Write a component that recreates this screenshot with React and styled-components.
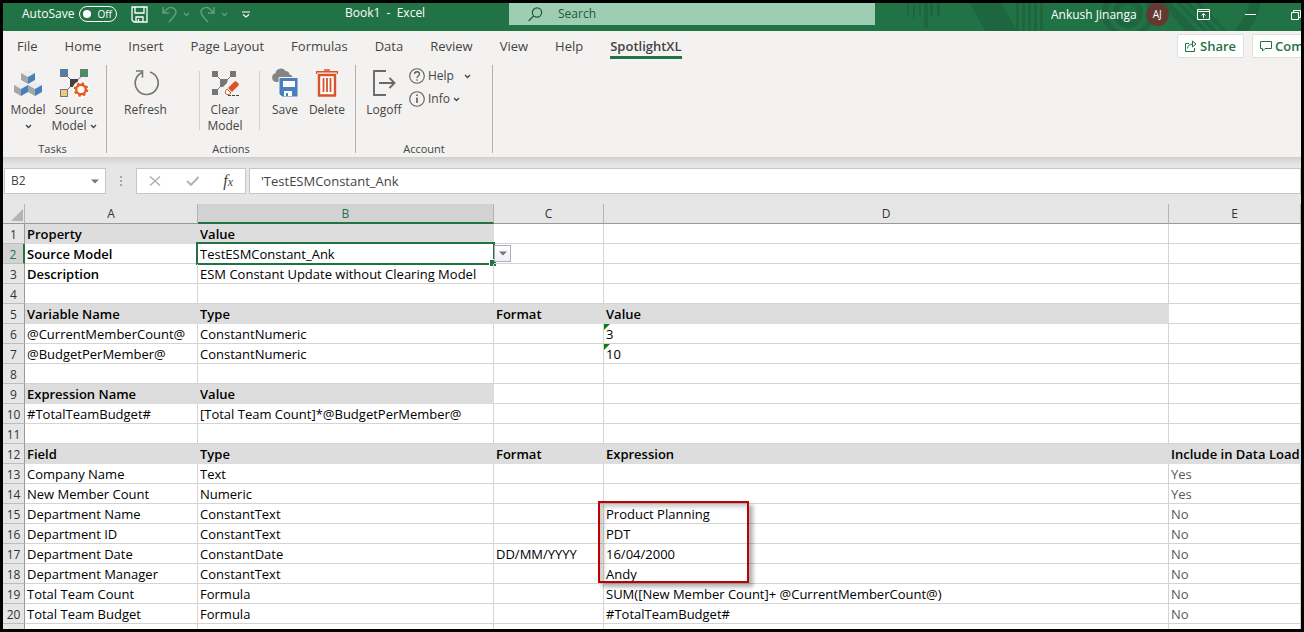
import React, { useState } from 'react';
import styled, { createGlobalStyle, css } from 'styled-components';

const GlobalStyle = createGlobalStyle`
    * {
        box-sizing: border-box;
    }
    body {
        margin: 0;
    }
    button, input {
        font: inherit;
        color: inherit;
    }
    button {
        background: none;
        border: 0;
        padding: 0;
    }
`;

const Frame = styled.div`
    height: 100vh;
    display: flex;
    flex-direction: column;
    overflow: hidden;
    border: 3px solid #000;
    background: #e6e6e6;
    color: #444;
    font-family: "Open Sans", "Noto Sans", sans-serif;
    font-size: 12px;
    line-height: 16px;
`;

/* ---- title bar ---- */

const TitleBar = styled.header`
    position: relative;
    flex: none;
    display: flex;
    align-items: flex-start;
    height: 28px;
    background: #217346;
    color: #fff;
    overflow: hidden;
`;

const Pattern = styled.svg`
    position: absolute;
    top: 0;
    right: 0;
`;

const QuickAccess = styled.div`
    flex: none;
    display: flex;
    align-items: center;
    width: 342px;
    height: 22px;
    padding-left: 19px;
`;

const AutoSave = styled.label`
    display: flex;
    align-items: center;
    gap: 5px;
    margin-right: 14px;
`;

const Switch = styled.span`
    display: flex;
    align-items: center;
    width: 38px;
    height: 16px;
    padding: 0 4px 0 3px;
    border: 1px solid #fff;
    border-radius: 8px;
    font-size: 10px;
    line-height: 14px;
`;

const Knob = styled.input`
    appearance: none;
    flex: none;
    width: 8px;
    height: 8px;
    margin: 0 6px 0 0;
    border-radius: 50%;
    background: #fff;
`;

const ToolButton = styled.button`
    display: flex;
    margin-right: ${({ $gap }) => $gap || 0}px;
    opacity: ${({ disabled }) => (disabled ? 0.3 : 1)};
`;

const BookTitle = styled.div`
    flex: none;
    width: 164px;
    padding-top: 2px;
    white-space: pre;
`;

const SearchBox = styled.label`
    flex: 0 1 366px;
    display: flex;
    align-items: center;
    gap: 15px;
    height: 22px;
    padding-left: 19px;
    background: #9fcdb3;
    color: #185c37;

    input {
        flex: 1;
        min-width: 0;
        padding: 0;
        border: 0;
        outline: 0;
        background: none;
    }
    input::placeholder {
        color: #185c37;
        opacity: 1;
    }
`;

const Account = styled.div`
    position: relative;
    flex: none;
    display: flex;
    align-items: center;
    gap: 9px;
    height: 23px;
    width: 250px;
    margin-left: auto;
    overflow: hidden;
    white-space: nowrap;
`;

const Avatar = styled.span`
    flex: none;
    width: 23px;
    height: 23px;
    border-radius: 50%;
    background: #633a31;
    font-size: 10px;
    line-height: 23px;
    text-align: center;
`;

const WindowButtons = styled.div`
    display: flex;
    align-items: center;
    gap: 35px;
    margin-left: 19px;
`;

/* ---- tabs ---- */

const TabBar = styled.nav`
    flex: none;
    display: flex;
    height: 31px;
    padding-left: 14px;
    background: #f3f2f1;
`;

const Tab = styled.a`
    height: 28px;
    padding-top: 7px;
    margin-right: 27px;
    border-bottom: 3px solid transparent;
    color: #444;
    font-size: 13px;
    text-decoration: none;
    white-space: nowrap;

    ${({ $active }) => $active && css`
        border-color: #217346;
        font-weight: 600;
    `}
`;

const TabActions = styled.div`
    display: flex;
    gap: 8px;
    width: 124px;
    margin-left: auto;
    padding-top: 3px;
    overflow: hidden;
`;

const TabAction = styled.button`
    flex: none;
    display: flex;
    align-items: center;
    gap: 3px;
    height: 24px;
    padding: 0 7px;
    border: 1px solid #e1dfdd;
    border-radius: 2px;
    background: #fff;
    color: #217346;
    font-size: 13px;
    font-weight: 600;
`;

/* ---- ribbon ---- */

const Ribbon = styled.section`
    flex: none;
    display: flex;
    height: 95px;
    padding-top: 3px;
    background: #f3f2f1;
`;

const Group = styled.div`
    display: flex;
    flex-direction: column;
    justify-content: space-between;
    width: ${({ $width }) => $width}px;
    height: 88px;
    border-right: 1px solid #b3b0ad;
`;

const GroupRow = styled.div`
    display: flex;
    padding-left: ${({ $indent }) => $indent || 0}px;
`;

const GroupLabel = styled.div`
    padding-right: ${({ $inset }) => $inset || 0}px;
    height: 10px;
    line-height: 12px;
    font-size: 11px;
    text-align: center;
`;

const RibbonButton = styled.button`
    display: flex;
    flex-direction: column;
    align-items: center;
    width: ${({ $width }) => $width}px;
    padding-top: 3px;
    white-space: nowrap;

    > svg {
        margin-bottom: 4px;
    }
    span {
        display: flex;
        align-items: center;
        gap: 3px;
        height: 16px;
    }
`;

const Divider = styled.div`
    width: 1px;
    height: 59px;
    margin: 6px ${({ $after }) => $after || 0}px 0 ${({ $before }) => $before || 0}px;
    background: #d2d0ce;
`;

const SmallButtons = styled.div`
    display: flex;
    flex-direction: column;
    align-items: flex-start;
    gap: 7px;
    padding: 3px 0 0 2px;
`;

const SmallButton = styled.button`
    display: flex;
    align-items: center;
    gap: 3px;
    height: 16px;

    svg:last-child {
        margin-left: ${({ $gap }) => $gap || 0}px;
    }
`;

/* ---- formula bar ---- */

const FormulaBar = styled.section`
    flex: none;
    display: flex;
    height: 47px;
    padding: 11px 0 10px 1px;
    background: linear-gradient(#d0d0d0, #e6e6e6 8px);
`;

const Box = styled.div`
    display: flex;
    align-items: center;
    flex: ${({ $width }) => ($width ? `0 0 ${$width}px` : '1')};
    min-width: 0;
    border: 1px solid #c6c6c6;
    background: #fff;
    font-size: ${({ $width }) => ($width ? 12 : 13)}px;

    input {
        flex: 1;
        min-width: 0;
        padding: 0 0 0 ${({ $indent }) => $indent || 6}px;
        border: 0;
        outline: 0;
        background: none;
    }
`;

const CaretButton = styled.button`
    display: flex;
    padding: 0 6px;
`;

const Dots = styled.div`
    display: flex;
    justify-content: center;
    align-items: center;
    flex: 0 0 30px;
`;

const FormulaTools = styled(Box)`
    justify-content: space-between;
    margin-right: 3px;
    padding: 0 12px;
`;

/* ---- sheet ---- */

const Sheet = styled.table`
    width: 100%;
    table-layout: fixed;
    border-spacing: 0;
    background: #fff;
    color: #000;
    font-size: 13px;
    line-height: 17px;

    col.rows { width: 22px; }
    col.a { width: 173px; }
    col.b { width: 296px; }
    col.c { width: 110px; }
    col.d { width: 565px; }
`;

const ColumnHead = styled.th`
    height: 20px;
    padding: 0;
    border-right: 1px solid #b4b4b4;
    border-bottom: 1px solid #999;
    background: #e6e6e6;
    color: #333;
    font-weight: 400;
    font-size: 12px;
    line-height: 18px;

    ${({ $selected }) => $selected && css`
        border-bottom: 2px solid #217346;
        background: #d2d2d2;
        color: #217346;
        line-height: 17px;
    `}
    svg {
        display: block;
        margin: 2px 1px 0 auto;
    }
`;

const RowHead = styled.th`
    height: 20px;
    padding: 2px 0 0;
    border-right: 1px solid #999;
    border-bottom: 1px solid #bdbdbd;
    background: #e6e6e6;
    color: #333;
    font-weight: 400;
    font-size: 12px;

    ${({ $selected }) => $selected && css`
        border-right: 2px solid #217346;
        background: #d2d2d2;
        color: #217346;
    `}
`;

const Cell = styled.td`
    position: relative;
    height: 20px;
    padding: 2px 0 0 2px;
    border-right: 1px solid #d4d4d4;
    border-bottom: 1px solid #d4d4d4;
    color: ${({ $muted }) => ($muted ? '#595959' : '#000')};
    font-weight: ${({ $bold }) => ($bold ? 600 : 400)};
    white-space: nowrap;

    ${({ $shaded }) => $shaded && css`
        border-color: #ddd;
        background: #ddd;
    `}
`;

const Selection = styled.div`
    position: absolute;
    inset: -2px;
    border: 2px solid #217346;

    &::after {
        content: "";
        position: absolute;
        right: -3px;
        bottom: -3px;
        width: 6px;
        height: 6px;
        border: solid #fff;
        border-width: 1px 0 0 1px;
        background: #217346;
    }
`;

const ValidationButton = styled.button`
    position: absolute;
    z-index: 1;
    left: calc(100% + 1px);
    top: 1px;
    display: flex;
    align-items: center;
    justify-content: center;
    width: 17px;
    height: 17px;
    border: 1px solid #a9b0b8;
    background: linear-gradient(#fff, #eceff3);
`;

const ErrorMark = styled.i`
    position: absolute;
    top: 0;
    left: 0;
    border-top: 6px solid #107c10;
    border-right: 6px solid transparent;
`;

const Highlight = styled.div`
    position: absolute;
    z-index: 2;
    top: -3px;
    left: -6px;
    width: 151px;
    height: 82px;
    border: 2px solid #c00000;
    box-shadow: 4px 4px 4px rgba(0, 0, 0, 0.3), inset 4px 4px 4px rgba(0, 0, 0, 0.2);
    pointer-events: none;
`;

/* ---- icons ---- */

const Chevron = ({ color = '#444' }) => (
    <svg width="7" height="5" viewBox="0 0 7 5" fill="none" stroke={color} strokeWidth="1.3">
        <path d="M1 1l2.5 2.5L6 1" />
    </svg>
);

const Caret = () => (
    <svg width="8" height="5" viewBox="0 0 8 5"><path d="M0 .5h8L4 4.5z" fill="#777" /></svg>
);

const SaveDiskIcon = () => (
    <svg width="17" height="17" viewBox="0 0 17 17" fill="none" stroke="#fff" strokeWidth="1.3">
        <path d="M1 1h15v15H3l-2-2zM4 1v6h9V1M5 16v-5h7v5M7.5 13v3" />
    </svg>
);

const UndoIcon = ({ flip }) => (
    <svg width="15" height="17" viewBox="0 0 15 17" fill="none" stroke="#fff" strokeWidth="1.5">
        <path
            transform={flip ? 'translate(15 0) scale(-1 1)' : undefined}
            d="M1 1v6h6M1 7l4-4c3-3 9-1 9 3 0 3-2 4-7 10"
        />
    </svg>
);

const CustomizeIcon = () => (
    <svg width="8" height="7" viewBox="0 0 8 7" fill="none" stroke="#fff" strokeWidth="1.2">
        <path d="M0 1h8M1 3.5l3 2.5 3-2.5" />
    </svg>
);

const SearchIcon = () => (
    <svg width="15" height="15" viewBox="0 0 15 15" fill="none" stroke="#185c37" strokeWidth="1.2">
        <circle cx="9" cy="5.5" r="4.6" />
        <path d="M5.7 8.8L.6 14" />
    </svg>
);

const TitlePattern = () => (
    <Pattern width="420" height="28" viewBox="0 0 420 28" fill="#1d6640">
        <path d="M26 0h2v13h-2zM32 0h2v16h-2zM38 0h2v13h-2zM43 0h4v25h-4zM49 0h3v13h-3zM56 0h3v13h-3z" />
        <path d="M89 0h31l16 28h-32zM135 0h3v28h-3zM141 0h3v28h-3zM147 0h3v28h-3zM153 0h3v28h-3zM159 0h3v28h-3z" />
        <g fill="none" stroke="#1d6640" strokeWidth="6">
            <circle cx="247" cy="10" r="23" />
            <circle cx="247" cy="10" r="12" />
            <path d="M374 -4c0 12-6 24-16 34" strokeWidth="11" />
        </g>
        <path d="M280 0h10l27 28h-12zM296 0h4l27 28h-5zM305 0h4l27 28h-5zM315 0h4l27 28h-5z" />
    </Pattern>
);

const RibbonDisplayIcon = () => (
    <svg width="13" height="11" viewBox="0 0 13 11" fill="none" stroke="#fff">
        <path d="M.5.5h12v10H.5zM.5 2.5h12M6.5 9V5M4.5 6.5l2-2 2 2" />
    </svg>
);

const MinimizeIcon = () => (
    <svg width="11" height="11" viewBox="0 0 11 11" stroke="#fff"><path d="M0 5.5h11" /></svg>
);

const RestoreIcon = () => (
    <svg width="10" height="10" viewBox="0 0 10 10" fill="none" stroke="#fff">
        <path d="M.5 2.5h7v7h-7zM2.5 2.5v-2h7v7h-2" />
    </svg>
);

const ShareIcon = () => (
    <svg width="12" height="12" viewBox="0 0 12 12" fill="none" stroke="#217346">
        <path d="M4 3.5H.5v8h9V8M2.5 8.5c.5-3 2-4.5 5-4.5M7.5 1L11 4 7.5 7V1z" />
    </svg>
);

const CommentIcon = () => (
    <svg width="12" height="11" viewBox="0 0 12 11" fill="none" stroke="#217346">
        <path d="M.5.5h11v7H5L2.5 10V7.5h-2z" />
    </svg>
);

const Cube = ({ x, y }) => (
    <g transform={`translate(${x} ${y})`}>
        <path d="M0 3l7-3 7 3-7 4z" fill="#ececec" />
        <path d="M0 3l7 4v7l-7-4z" fill="#a6a6a6" />
        <path d="M14 3L7 7v7l7-4z" fill="#4a7fbe" />
    </g>
);

const ModelIcon = () => (
    <svg width="28" height="30" viewBox="0 0 28 30">
        <Cube x={7} y={2} />
        <Cube x={0} y={14} />
        <Cube x={14} y={14} />
    </svg>
);

const SourceModelIcon = () => (
    <svg width="30" height="30" viewBox="0 0 30 30">
        <path d="M5 5l10 10L26 5M15 15L5 25" stroke="#767676" fill="none" />
        <rect x="1.5" y="1.5" width="7" height="7" fill="#4a7fbe" stroke="#767676" />
        <rect x="21.5" y="1.5" width="7" height="7" fill="#3f9464" stroke="#767676" />
        <rect x="1.5" y="21.5" width="7" height="7" fill="#edc77d" stroke="#767676" />
        <rect x="11" y="11" width="8" height="8" fill="#404040" />
        <circle cx="22" cy="21.5" r="8.5" fill="#fff" />
        <circle cx="22" cy="21.5" r="4.8" fill="none" stroke="#e8591c" strokeWidth="2.4" />
        <circle cx="22" cy="21.5" r="6.4" fill="none" stroke="#e8591c" strokeWidth="1.8" strokeDasharray="2.5 2.526" />
    </svg>
);

const RefreshIcon = () => (
    <svg width="26" height="30" viewBox="0 0 26 30" fill="none" stroke="#767676" strokeWidth="1.7">
        <path d="M9 4.5A11.5 11.5 0 1 0 17 4" />
        <path d="M3 3h6.5v6.5" strokeWidth="1.6" />
    </svg>
);

const ClearModelIcon = () => (
    <svg width="28" height="30" viewBox="0 0 28 30">
        <path d="M4 6l9 9L22 6M13 15l-9 9" stroke="#767676" fill="none" />
        <path d="M1 3h6v6H1zM19 3h6v6h-6zM1 21h6v6H1zM9 11h8l-1 4-4 4H9z" fill="#767676" />
        <path d="M17 20l6-6c1-1 2-1 3 0l1 1c1 1 1 2 0 3l-6 6z" fill="#d9532c" />
        <path d="M16 21l4 4c-2 2-4 2-5 1s-1-3 1-5z" fill="#fff" stroke="#d9532c" />
        <path d="M17 27.5h11" stroke="#444" strokeDasharray="3 1" />
    </svg>
);

const SaveIcon = () => (
    <svg width="28" height="30" viewBox="0 0 28 30">
        <path d="M5 14a4.5 4.5 0 0 1-.5-8.8A5.5 5.5 0 0 1 14.5 3a4 4 0 0 1 4 3.5 3.5 3.5 0 0 1 3 4.5L9 14z" fill="#848484" />
        <path d="M8 9.5h19V29H11l-3-3z" fill="#4a7fbe" stroke="#f3f2f1" />
        <path d="M12 13h12v6H12zM13 23h8v5h-8z" fill="#fff" />
        <path d="M15 25h2v3h-2z" fill="#4a7fbe" />
    </svg>
);

const DeleteIcon = () => (
    <svg width="22" height="30" viewBox="0 0 22 30" fill="none" stroke="#d9532c">
        <path d="M0 3.8h22M.5 4v2M21.5 4v2M8 2h6" strokeWidth="1.5" />
        <path d="M3 7h16v20.5H3z" fill="#fff" strokeWidth="2.4" />
        <path d="M7.5 10v14M11 10v14M14.5 10v14" strokeWidth="1.8" />
    </svg>
);

const LogoffIcon = () => (
    <svg width="24" height="30" viewBox="0 0 24 30" fill="none" stroke="#6a6a6a" strokeWidth="1.9">
        <path d="M14 3H2v24h12M7 15h16M17.5 10l5 5-5 5" />
    </svg>
);

const CircleGlyph = ({ info }) => (
    <svg width="16" height="16" viewBox="0 0 16 16" fill="none" stroke="#5e5e5e" strokeWidth="1.1">
        <circle cx="8" cy="8" r="7.3" />
        {info ? (
            <path d="M8 6.5V12M8 3.5V5" strokeWidth="1.6" />
        ) : (
            <path d="M5.5 6c0-3 5-3 5 0 0 2-2.5 2-2.5 4M8 11.2v1.5" strokeWidth="1.3" />
        )}
    </svg>
);

const DotsIcon = () => (
    <svg width="3" height="12" viewBox="0 0 3 12" fill="#a6a6a6">
        <path d="M0 1h2v2H0zM0 5h2v2H0zM0 9h2v2H0z" />
    </svg>
);

const CancelIcon = () => (
    <svg width="12" height="10" viewBox="0 0 12 10" stroke="#b4b4b4" strokeWidth="1.6"><path d="M1 .5l10 9M11 .5l-10 9" /></svg>
);

const EnterIcon = () => (
    <svg width="13" height="10" viewBox="0 0 13 10" fill="none" stroke="#b4b4b4" strokeWidth="2"><path d="M1 5l4 4 7.5-8" /></svg>
);

const FxIcon = styled.i`
    color: #444;
    font: italic 400 16px/16px "Liberation Serif", serif;

    small {
        font-size: 12px;
    }
`;

const SelectAllIcon = () => (
    <svg width="12" height="12" viewBox="0 0 12 12"><path d="M12 0v12H0z" fill="#b4b4b4" /></svg>
);

/* ---- data ---- */

const tabs = ['File', 'Home', 'Insert', 'Page Layout', 'Formulas', 'Data', 'Review', 'View', 'Help', 'SpotlightXL'];

const columns = ['A', 'B', 'C', 'D', 'E'];

// shade is the number of columns that have the heading fill
const rows = [
    { cells: ['Property', 'Value'], shade: 2 },
    { cells: ['Source Model', 'TestESMConstant_Ank'], bold: true },
    { cells: ['Description', 'ESM Constant Update without Clearing Model'], bold: true },
    { cells: [] },
    { cells: ['Variable Name', 'Type', 'Format', 'Value'], shade: 4 },
    { cells: ['@CurrentMemberCount@', 'ConstantNumeric', '', '3'], warn: true },
    { cells: ['@BudgetPerMember@', 'ConstantNumeric', '', '10'], warn: true },
    { cells: [] },
    { cells: ['Expression Name', 'Value'], shade: 2 },
    { cells: ['#TotalTeamBudget#', '[Total Team Count]*@BudgetPerMember@'] },
    { cells: [] },
    { cells: ['Field', 'Type', 'Format', 'Expression', 'Include in Data Load'], shade: 5 },
    { cells: ['Company Name', 'Text', '', '', 'Yes'] },
    { cells: ['New Member Count', 'Numeric', '', '', 'Yes'] },
    { cells: ['Department Name', 'ConstantText', '', 'Product Planning', 'No'], highlight: true },
    { cells: ['Department ID', 'ConstantText', '', 'PDT', 'No'] },
    { cells: ['Department Date', 'ConstantDate', 'DD/MM/YYYY', '16/04/2000', 'No'] },
    { cells: ['Department Manager', 'ConstantText', '', 'Andy', 'No'] },
    { cells: ['Total Team Count', 'Formula', '', 'SUM([New Member Count]+ @CurrentMemberCount@)', 'No'] },
    { cells: ['Total Team Budget', 'Formula', '', '#TotalTeamBudget#', 'No'] },
    { cells: [], last: true },
];

const SheetRow = ({ row, number }) => {
    const shade = row.shade || 0;
    return (
        <tr>
            <RowHead scope="row" $selected={number === 2}>{row.last ? '' : number}</RowHead>
            {columns.map((col, i) => (
                <Cell
                    key={col}
                    $shaded={i < shade}
                    $bold={i < shade || (row.bold && i === 0)}
                    $muted={i === 4 && !shade}
                >
                    {row.warn && i === 3 && <ErrorMark />}
                    {row.cells[i]}
                    {number === 2 && i === 1 && (
                        <>
                            <Selection />
                            <ValidationButton aria-label="Pick from list"><Caret /></ValidationButton>
                        </>
                    )}
                    {row.highlight && i === 3 && <Highlight />}
                </Cell>
            ))}
        </tr>
    );
};

const App = () => {
    const [autoSave, setAutoSave] = useState(false);
    const [search, setSearch] = useState('');
    const [cellName, setCellName] = useState('B2');
    const [formula, setFormula] = useState("'TestESMConstant_Ank");

    return (
        <Frame>
            <GlobalStyle />
            <TitleBar>
                <TitlePattern />
                <QuickAccess>
                    <AutoSave>
                        AutoSave
                        <Switch>
                            <Knob type="checkbox" checked={autoSave} onChange={e => setAutoSave(e.target.checked)} />
                            {autoSave ? 'On' : 'Off'}
                        </Switch>
                    </AutoSave>
                    <ToolButton aria-label="Save" $gap={14}><SaveDiskIcon /></ToolButton>
                    <ToolButton aria-label="Undo" disabled $gap={6}><UndoIcon /></ToolButton>
                    <ToolButton aria-label="Undo list" disabled $gap={10}><Chevron color="#fff" /></ToolButton>
                    <ToolButton aria-label="Redo" disabled $gap={6}><UndoIcon flip /></ToolButton>
                    <ToolButton aria-label="Redo list" disabled $gap={14}><Chevron color="#fff" /></ToolButton>
                    <ToolButton aria-label="Customize toolbar"><CustomizeIcon /></ToolButton>
                </QuickAccess>
                <BookTitle>{'Book1  -  Excel'}</BookTitle>
                <SearchBox>
                    <SearchIcon />
                    <input
                        aria-label="Search"
                        placeholder="Search"
                        value={search}
                        onChange={e => setSearch(e.target.value)}
                    />
                </SearchBox>
                <Account>
                    Ankush Jinanga
                    <Avatar>AJ</Avatar>
                    <WindowButtons>
                        <ToolButton aria-label="Ribbon display options"><RibbonDisplayIcon /></ToolButton>
                        <ToolButton aria-label="Minimize"><MinimizeIcon /></ToolButton>
                        <ToolButton aria-label="Restore"><RestoreIcon /></ToolButton>
                    </WindowButtons>
                </Account>
            </TitleBar>

            <TabBar>
                {tabs.map(tab => (
                    <Tab key={tab} href="#" $active={tab === 'SpotlightXL'}>{tab}</Tab>
                ))}
                <TabActions>
                    <TabAction><ShareIcon />Share</TabAction>
                    <TabAction><CommentIcon />Comments</TabAction>
                </TabActions>
            </TabBar>

            <Ribbon>
                <Group $width={104}>
                    <GroupRow $indent={2}>
                        <RibbonButton $width={46}>
                            <ModelIcon />
                            <span>Model</span>
                            <span><Chevron /></span>
                        </RibbonButton>
                        <RibbonButton $width={46}>
                            <SourceModelIcon />
                            <span>Source</span>
                            <span>Model<Chevron /></span>
                        </RibbonButton>
                    </GroupRow>
                    <GroupLabel $inset={4}>Tasks</GroupLabel>
                </Group>
                <Group $width={249}>
                    <GroupRow>
                        <RibbonButton $width={77}>
                            <RefreshIcon />
                            <span>Refresh</span>
                        </RibbonButton>
                        <Divider $before={15} />
                        <RibbonButton $width={50}>
                            <ClearModelIcon />
                            <span>Clear</span>
                            <span>Model</span>
                        </RibbonButton>
                        <Divider $before={9} $after={4} />
                        <RibbonButton $width={42}>
                            <SaveIcon />
                            <span>Save</span>
                        </RibbonButton>
                        <RibbonButton $width={42}>
                            <DeleteIcon />
                            <span>Delete</span>
                        </RibbonButton>
                    </GroupRow>
                    <GroupLabel>Actions</GroupLabel>
                </Group>
                <Group $width={137}>
                    <GroupRow $indent={5}>
                        <RibbonButton $width={46}>
                            <LogoffIcon />
                            <span>Logoff</span>
                        </RibbonButton>
                        <SmallButtons>
                            <SmallButton $gap={7}><CircleGlyph />Help<Chevron /></SmallButton>
                            <SmallButton><CircleGlyph info />Info<Chevron /></SmallButton>
                        </SmallButtons>
                    </GroupRow>
                    <GroupLabel>Account</GroupLabel>
                </Group>
            </Ribbon>

            <FormulaBar>
                <Box $width={102}>
                    <input aria-label="Name box" value={cellName} onChange={e => setCellName(e.target.value)} />
                    <CaretButton aria-label="Names"><Caret /></CaretButton>
                </Box>
                <Dots><DotsIcon /></Dots>
                <FormulaTools $width={110}>
                    <ToolButton aria-label="Cancel"><CancelIcon /></ToolButton>
                    <ToolButton aria-label="Enter"><EnterIcon /></ToolButton>
                    <ToolButton aria-label="Insert function"><FxIcon>f<small>x</small></FxIcon></ToolButton>
                </FormulaTools>
                <Box $indent={11}>
                    <input aria-label="Formula" value={formula} onChange={e => setFormula(e.target.value)} />
                </Box>
            </FormulaBar>

            <Sheet>
                <colgroup>
                    <col className="rows" />
                    <col className="a" />
                    <col className="b" />
                    <col className="c" />
                    <col className="d" />
                    <col />
                </colgroup>
                <thead>
                    <tr>
                        <ColumnHead><SelectAllIcon /></ColumnHead>
                        {columns.map(col => (
                            <ColumnHead key={col} scope="col" $selected={col === 'B'}>{col}</ColumnHead>
                        ))}
                    </tr>
                </thead>
                <tbody>
                    {rows.map((row, i) => <SheetRow key={i} row={row} number={i + 1} />)}
                </tbody>
            </Sheet>
        </Frame>
    );
};

export default App;
